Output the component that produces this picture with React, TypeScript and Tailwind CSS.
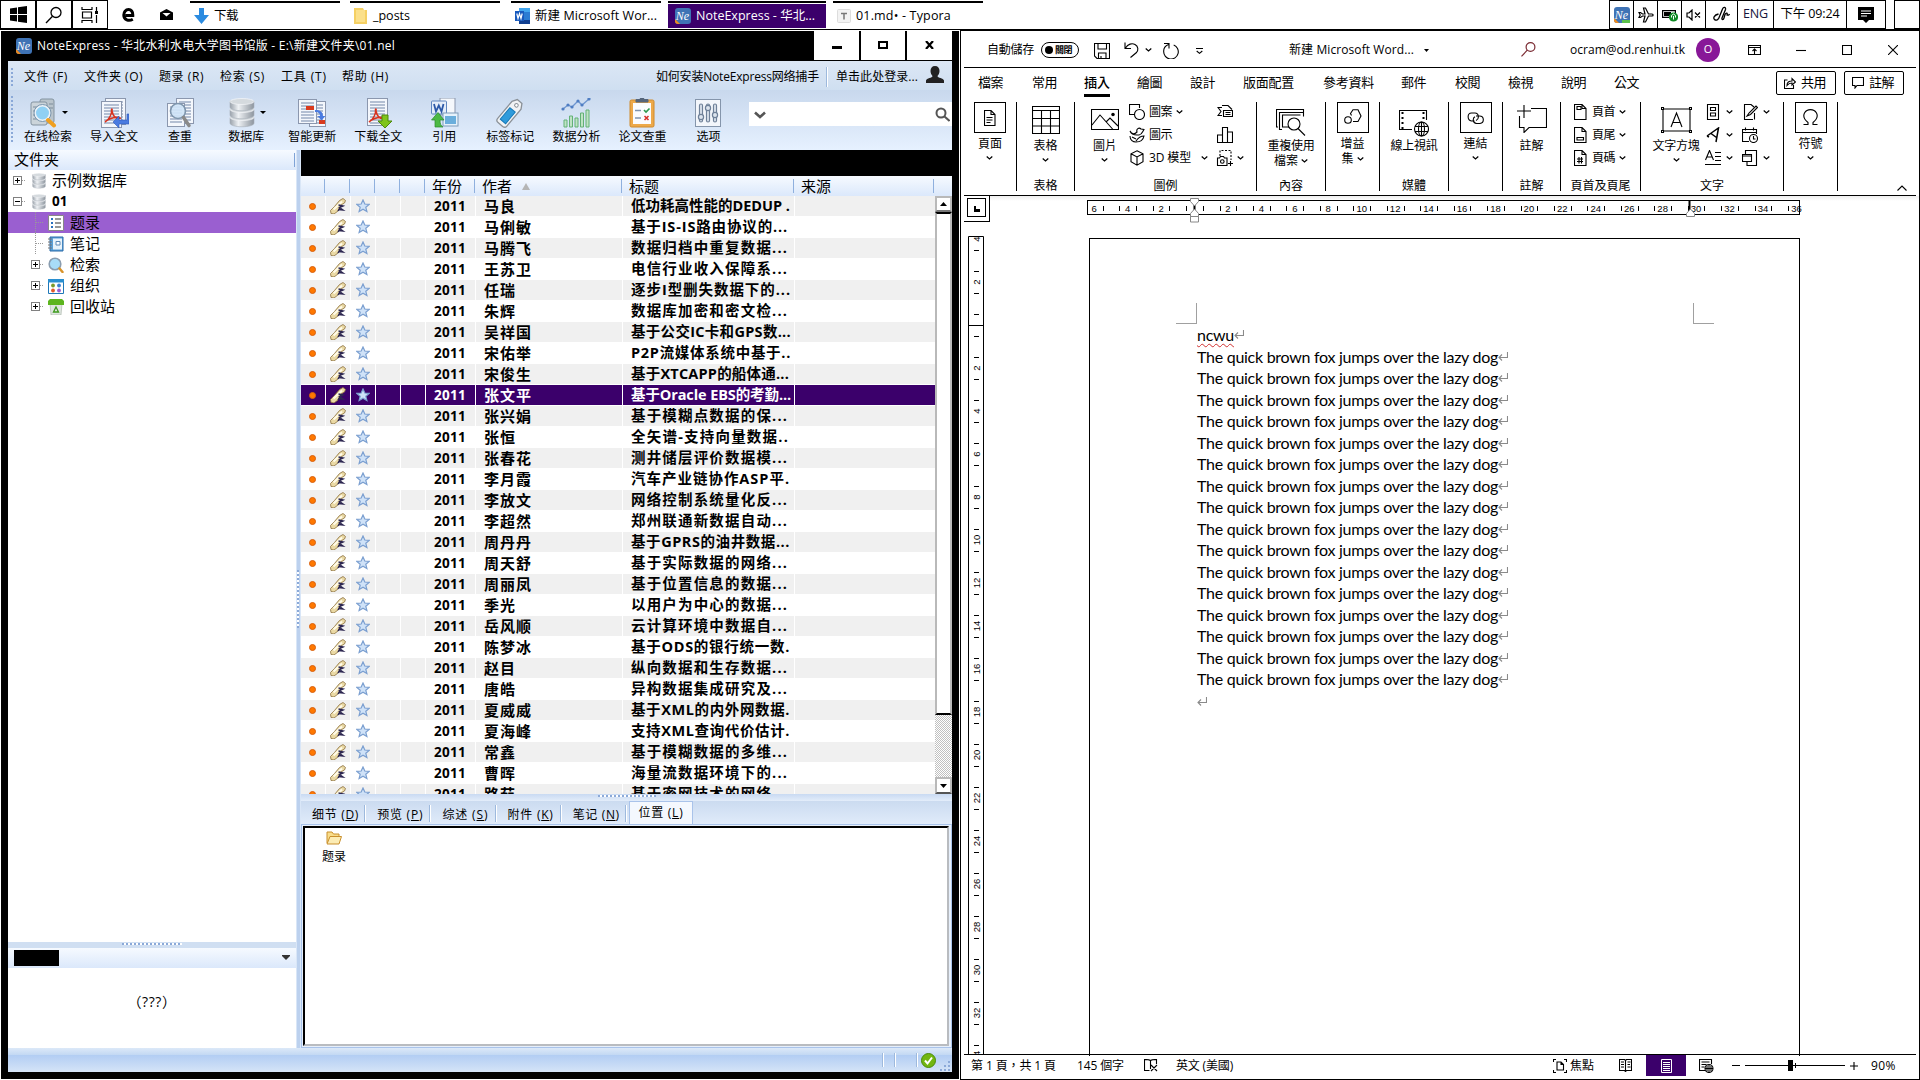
import React, { useLayoutEffect, useRef, useState } from "react";

/* Text run that adjusts its tracking so that it fills a given width. */
function Fit({ w, children, className = "" }: { w: number; children: React.ReactNode; className?: string }) {
  const ref = useRef<HTMLSpanElement>(null);
  const [ls, setLs] = useState(0);
  useLayoutEffect(() => {
    const el = ref.current;
    if (!el) return;
    const n = (el.textContent || "").length;
    if (n > 0) setLs((w - el.getBoundingClientRect().width) / n);
  }, [w]);
  return (
    <span className={"block shrink-0 whitespace-nowrap " + className} style={{ width: w, letterSpacing: ls }}>
      <span ref={ref}>{children}</span>
    </span>
  );
}

const SC = "font-['Open_Sans','Noto_Sans_CJK_SC',sans-serif]";
const TC = "font-['Open_Sans','Noto_Sans_CJK_TC',sans-serif]";

function NeLogo({ badge = false }: { badge?: boolean }) {
  return (
    <svg width="16" height="16" viewBox="0 0 16 16" className="shrink-0">
      <rect width="16" height="16" rx="3" fill="#3f73b5" />
      <path d="M0 11L5 16H3a3 3 0 0 1-3-3z" fill="#f08c1e" />
      {badge && <rect x="8" y="13" width="8" height="3" fill="#5cc04c" />}
      <text x="7.500" y="11.500" fontSize="12" fontStyle="italic" textAnchor="middle" fill="#fff" fontFamily="Liberation Serif">Ne</text>
    </svg>
  );
}

/* ---------- Taskbar ---------- */

function TaskTab({ cls, w, label, children, active = false }: { cls: string; w: number; label: string; children: React.ReactNode; active?: boolean }) {
  return (
    <div className={"flex h-[28px] shrink-0 flex-col pt-px " + cls}>
      <div className="h-[2px] bg-black" />
      <div className={"mt-px flex h-[24px] items-center gap-[5px] " + (active ? "bg-[#3b006b] pl-[7px] text-white" : "pl-[4px] text-black")}>
        {children}
        <Fit w={w} className="text-[12.5px]">{label}</Fit>
      </div>
    </div>
  );
}

function Taskbar() {
  return (
    <div className={"flex h-[29px] bg-white " + SC}>
      <div className="flex h-[29px] w-[36px] shrink-0 items-center justify-center border border-black">
        <svg width="17" height="17" viewBox="0 0 17 17"><path d="M0 2.4L7 1.4V8H0zM8 1.2L17 0v8H8zM0 9h7v6.6l-7-1zM8 9h9v8l-9-1.2z" /></svg>
      </div>
      <div className="flex h-[29px] w-[36px] shrink-0 items-center justify-center border border-black">
        <svg width="18" height="18" viewBox="0 0 18 18" fill="none" stroke="#000" strokeWidth="1.3"><circle cx="11" cy="6.5" r="5" /><path d="M7.5 10.2L1 17" /></svg>
      </div>
      <div className="flex h-[29px] w-[36px] shrink-0 items-center justify-center border border-black">
        <svg width="18" height="18" viewBox="0 0 18 18" fill="none" stroke="#000" strokeWidth="1.2"><path d="M1 1v2.5h10V1M1 17v-2.500h10V17M1.500 6h9v6h-9zM15.500 1v4M15.500 9v8" /><path d="M14 5h3v3h-3z" fill="#000" stroke="none" /></svg>
      </div>
      <div className="ml-[14px] flex w-[14px] shrink-0 items-center">
        <svg width="13" height="14" viewBox="0 0 13 14" fill="none" stroke="#000" strokeWidth="3"><path d="M3.5 7.5H10.8C11 3.5 9 1.6 6.6 1.6 3.6 1.6 1.8 4 1.8 7c0 5 5 6.500 9 4.300" /></svg>
      </div>
      <div className="ml-[24px] flex w-[13px] shrink-0 items-center">
        <svg width="13" height="11" viewBox="0 0 13 11"><path d="M0 3.500L6.500 0 13 3.500V11H0z" /><path d="M2.500 4h8L6.500 7.500z" fill="#fff" /></svg>
      </div>
      <TaskTab cls="ml-[17px] w-[150px]" w={24} label="下载">
        <svg width="15" height="16" viewBox="0 0 15 16"><path d="M5 0h5v7h5l-7.500 9L0 7h5z" fill="#2b8be0" /></svg>
      </TaskTab>
      <TaskTab cls="ml-[10px] w-[150px]" w={37} label="_posts">
        <svg width="14" height="16" viewBox="0 0 14 16"><path d="M0 0h9l1 2h3v14H0z" fill="#f5d063" /><path d="M2 2h9v12H2z" fill="#fbe08a" /></svg>
      </TaskTab>
      <TaskTab cls="ml-[11px] w-[150px]" w={122} label="新建 Microsoft Wor...">
        <svg width="15" height="16" viewBox="0 0 15 16"><path d="M4 0h11v16H4z" fill="#2b7cd3" /><path d="M4 0h11v4H4z" fill="#41a5ee" /><path d="M4 12h11v4H4z" fill="#103f91" /><path d="M0 3h9v10H0z" fill="#185abd" /><path d="M1.800 5.500l1.200 5 1.500-5 1.500 5 1.200-5" fill="none" stroke="#fff" strokeWidth="1.200" /></svg>
      </TaskTab>
      <TaskTab cls="ml-[7px] w-[158px]" w={119} label="NoteExpress - 华北..." active>
        <NeLogo />
      </TaskTab>
      <TaskTab cls="ml-[7px] w-[150px]" w={95} label="01.md• - Typora">
        <svg width="14" height="16" viewBox="0 0 14 16"><rect x=".5" y="1.500" width="13" height="13" rx="1" fill="#f3f3f3" stroke="#ddd" /><path d="M4 5.500h6M7 5.500v6" stroke="#777" strokeWidth="1.500" /></svg>
      </TaskTab>
      <div className="ml-auto flex">
        <div className="flex w-[25px] items-center justify-center border border-black"><NeLogo badge /></div>
        <div className="-ml-px flex w-[25px] items-center justify-center border border-black">
          <svg width="16" height="16" viewBox="0 0 16 16" fill="none" stroke="#000" strokeWidth="1.200"><path d="M1 5.500l1.200 2.500L1 10.500h1.500L4.500 9H7l-1.500 6h2L10.500 9H14c1.500 0 1.500-2 0-2h-3.500l-3-6h-2L7 7H4.500l-2-1.500z" /></svg>
        </div>
        <div className="-ml-px flex w-[25px] items-center justify-center border border-black">
          <svg width="16" height="14" viewBox="0 0 16 14"><path d="M.6 2.600h12.800v6.800H.6z" fill="none" stroke="#000" strokeWidth="1.200" /><path d="M2 4h7v4H2z" /><circle cx="11.500" cy="9" r="4.600" fill="#0f8a24" /><path d="M11.500 11.500V8M9.500 9.500V7.500l2-1.500 2 1.500v2" fill="none" stroke="#fff" /></svg>
        </div>
        <div className="-ml-px flex w-[25px] items-center justify-center border border-black">
          <svg width="15" height="12" viewBox="0 0 15 12" fill="none" stroke="#000" strokeWidth="1.200"><path d="M1 4h2l3-3v10L3 8H1zM9 3.500l5 5M14 3.500l-5 5" /></svg>
        </div>
        <div className="-ml-px flex w-[33px] items-center justify-center border border-black">
          <svg width="17" height="17" viewBox="0 0 17 17" fill="none" stroke="#000" strokeWidth="1.300"><path d="M5.500 8C1 9 0 12 1.500 13.500s4 .5 5-3L9.500 3c1-2.500 3.500-2 3 .5L9 12c-.5 2 1.500 2 2 0l1-3.500c1-2 3-1.500 2 .5 1 .5 2 0 2.500-1" /></svg>
        </div>
        <div className="-ml-px flex w-[37px] items-center justify-center border border-black text-[12.500px] text-[#14143c]"><Fit w={25}>ENG</Fit></div>
        <div className="-ml-px flex w-[74px] items-center justify-center border border-black text-[12.500px]"><Fit w={59}>下午 09:24</Fit></div>
        <div className="-ml-px flex w-[40px] items-center justify-center border border-black">
          <svg width="16" height="16" viewBox="0 0 16 16"><path d="M0 0h16v13h-5l-3 3-3-3H0z" /><path d="M3 4h10M3 6.500h10M3 9h6" stroke="#fff" strokeWidth="1.200" /></svg>
        </div>
        <div className="ml-[8px] w-[26px] border border-black" />
      </div>
    </div>
  );
}

/* ---------- NoteExpress toolbar drawings ---------- */

const Sheet = ({ x, y, w = 20, h = 26 }: { x: number; y: number; w?: number; h?: number }) => (
  <g>
    <rect x={x + 0.5} y={y + 0.5} width={w} height={h} fill="#f4f7fc" stroke="#8b97ae" />
    {Array.from({ length: Math.floor(h / 3) - 1 }, (_, i) => (
      <path key={i} d={`M${x + 3} ${y + 4 + i * 3}h${w - 5}`} stroke="#7387a9" />
    ))}
  </g>
);

const Acro = () => <path d="M6 24c5-3 7-9 6.500-12 0-2 1-1 .5 1 1 5 4 8 8 7.500 1-.5-.5-1.500-3-1.300-4 .3-9 2-12 4.800z" fill="none" stroke="#d9321e" strokeWidth="1.500" />;

const Cyl = ({ s = 30 }: { s?: number }) => (
  <svg width={s} height={s} viewBox="0 0 30 30" className="shrink-0">
    <defs><linearGradient id="cyl" x1="0" x2="1"><stop offset="0" stopColor="#9aa2ab" /><stop offset=".35" stopColor="#eef1f4" /><stop offset="1" stopColor="#8d959e" /></linearGradient></defs>
    {[19, 11, 3].map((y) => (
      <g key={y}><path d={`M3 ${y}v6c0 5 24 5 24 0v-6z`} fill="url(#cyl)" stroke="#a8b0b8" strokeWidth=".6" /><ellipse cx="15" cy={y + 0.5} rx="12" ry="3" fill="#d5dade" stroke="#f6f8fa" strokeWidth=".7" /></g>
    ))}
  </svg>
);

const toolIcons: Record<string, React.ReactNode> = {
  online: <g><rect x="11" y="1" width="14" height="24" rx="2" fill="#b9c4cc" stroke="#8393a0" /><rect x="2" y="4" width="16" height="23" rx="2" fill="#cbd4da" stroke="#8393a0" /><path d="M4 9h6M4 13h5M4 17h5M4 21h8M20 6h4M20 10h4" stroke="#7d8d9b" /><circle cx="13.500" cy="15" r="7.500" fill="#8fd0f4" stroke="#eaf2f8" strokeWidth="2" /><circle cx="13.500" cy="15" r="8.500" fill="none" stroke="#7a95ad" /><path d="M19 22l6 5.500" stroke="#f0a020" strokeWidth="4" strokeLinecap="round" /></g>,
  imp: <g><Sheet x={6} y={0} /><Sheet x={2} y={3} /><Acro /><path d="M28 16v6h-8v-4l-6 6 6 6v-4h10V16z" fill="#4a7be0" stroke="#2c58b8" strokeWidth=".6" /></g>,
  dup: <g><Sheet x={11} y={0} w={17} h={25} /><Sheet x={2} y={5} w={17} h={23} /><circle cx="13" cy="13" r="7.500" fill="#cfe4f7" fillOpacity=".92" stroke="#7f96ad" strokeWidth="1.600" /><path d="M18.500 19.500l5.500 8" stroke="#8a8a8a" strokeWidth="3.500" strokeLinecap="round" /></g>,
  upd: <g><Sheet x={12} y={3} w={16} h={25} /><Sheet x={1} y={1} w={18} h={24} /><path d="M9 8h8v4H9zM22 22h6v4h-6z" fill="#d93a1e" /><path d="M18 14c4 0 5 2 5 4h-2.500l4 4.500 4-4.500H26c0-4-3-6.500-8-6z" fill="#4a7be0" /></g>,
  down: <g><Sheet x={4} y={0} w={20} h={27} /><Acro /><path d="M19 17h6v6h4l-7 7-7-7h4z" fill="#7fc41c" stroke="#4d8a0c" /></g>,
  cite: <g><rect x="11" y="0" width="15" height="17" fill="#f5f8fc" stroke="#8b97ae" /><rect x="2.500" y="3" width="15" height="13" rx="1" fill="#e4edf9" stroke="#5f86c0" /><path d="M5 6l2 7.500 2.800-6 2.700 6 2-7.500" fill="none" stroke="#2c59a8" strokeWidth="1.800" /><rect x="14" y="15" width="15" height="13" fill="#e6f2fb" stroke="#7f9cba" /><path d="M16 18h11v8H16z" fill="#6aaedc" /><path d="M6 29V22H2.500L9 14.500l6 7.500h-4c0 4 1 6 3 7z" fill="#4cb944" stroke="#2a8a28" strokeWidth=".7" /></g>,
  tag: <g transform="rotate(40 15 15)"><path d="M9 5l3-5h6l3 5v22q0 3-3 3h-6q-3 0-3-3z" fill="#f1f3f5" stroke="#8b9198" strokeWidth="1.300" /><rect x="11.500" y="11" width="7" height="15" fill="#2f9bdb" stroke="#1779b8" /><circle cx="15" cy="5" r="1.800" fill="#fff" stroke="#8b9198" /></g>,
  chart: <g><path d="M2 11l5-4 4 2 6-6 4 4 7-6" fill="none" stroke="#6d95cf" strokeWidth="1.300" />{[[2, 11], [7, 7], [11, 9], [17, 3], [21, 7], [28, 1]].map(([x, y]) => <circle key={x} cx={x} cy={y} r="1.600" fill="#4f7dc2" />)}<path d="M3 22h3v7H3zM8.500 18h3v11h-3zM14 20h3v9h-3zM19.500 15h3v14h-3zM25 12h3v17h-3z" fill="#bfe3c4" stroke="#62b176" /></g>,
  check: <g><rect x="3" y="2" width="24" height="27" rx="1.500" fill="#eda94a" stroke="#cf8a2c" /><path d="M6 5h18v21H6z" fill="#fbfcfe" /><path d="M9 4h12V1.500h-4a2 2 0 0 0-4 0H9z" fill="#54647a" stroke="#54647a" /><path d="M8 12.500h6M8 20h6" stroke="#7f93ae" strokeWidth="1.500" /><path d="M17 12l2 2 3.500-3.500" fill="none" stroke="#2f9a50" strokeWidth="1.600" /><path d="M17.500 18l4 4M21.500 18l-4 4" stroke="#d8302a" strokeWidth="1.600" /></g>,
  opts: <g><rect x="2.500" y="1.500" width="25" height="27" fill="#f3f6fb" stroke="#8595ab" /><g fill="#dce4ee" stroke="#6f8199" strokeWidth="1.200"><rect x="6.500" y="6" width="3" height="18" rx="1.500" /><rect x="13.500" y="6" width="3" height="18" rx="1.500" /><rect x="20.500" y="6" width="3" height="18" rx="1.500" /><circle cx="8" cy="19" r="2.600" /><circle cx="15" cy="10" r="2.600" /><circle cx="22" cy="17" r="2.600" /></g></g>,
};

const tools: { label: string; icon: string; drop?: boolean }[] = [
  { label: "在线检索", icon: "online", drop: true },
  { label: "导入全文", icon: "imp" },
  { label: "查重", icon: "dup" },
  { label: "数据库", icon: "db", drop: true },
  { label: "智能更新", icon: "upd" },
  { label: "下载全文", icon: "down" },
  { label: "引用", icon: "cite" },
  { label: "标签标记", icon: "tag" },
  { label: "数据分析", icon: "chart" },
  { label: "论文查重", icon: "check" },
  { label: "选项", icon: "opts" },
];

function NeTitle() {
  return (
    <div className="flex h-[30px] items-center bg-black pl-[8px] text-white">
      <NeLogo />
      <Fit w={358} className="ml-[5px] text-[12px]">NoteExpress - 华北水利水电大学图书馆版 - E:\新建文件夹\01.nel</Fit>
      <div className="ml-auto flex h-[29px] gap-[2px] self-start">
        <div className="flex w-[45px] items-center justify-center bg-white"><div className="mt-[3px] h-[3px] w-[10px] bg-black" /></div>
        <div className="flex w-[44px] items-center justify-center bg-white"><div className="-mt-[2px] h-[8px] w-[10px] border-2 border-black" /></div>
        <div className="flex w-[45px] items-center justify-center bg-white"><svg width="9" height="8" viewBox="0 0 9 8" className="-mt-[2px]"><path d="M1 0l7 8M8 0L1 8" stroke="#000" strokeWidth="2.200" /></svg></div>
      </div>
    </div>
  );
}

function NeMenu() {
  return (
    <div className="flex h-[29px] items-center bg-gradient-to-b from-[#dce7f5] to-[#cfdff1] pt-[2px] text-[12px]">
      <div className="ml-[3px] h-[18px] w-[2px] shrink-0 bg-[repeating-linear-gradient(180deg,#8ba9d8_0_2px,transparent_2px_4px)]" />
      <Fit w={44} className="ml-[11px]">文件 (F)</Fit>
      <Fit w={59} className="ml-[16px]">文件夹 (O)</Fit>
      <Fit w={45} className="ml-[16px]">题录 (R)</Fit>
      <Fit w={45} className="ml-[16px]">检索 (S)</Fit>
      <Fit w={46} className="ml-[16px]">工具 (T)</Fit>
      <Fit w={47} className="ml-[15px]">帮助 (H)</Fit>
      <Fit w={163} className="ml-[267px]">如何安装NoteExpress网络捕手</Fit>
      <div className="ml-[7px] h-[20px] w-[2px] shrink-0 border-r border-white bg-[#9db9dd]" />
      <Fit w={82} className="ml-[8px]">单击此处登录...</Fit>
      <svg width="18" height="17" viewBox="0 0 18 17" className="ml-[8px] -mt-[4px] shrink-0"><path d="M9 0c3 0 4.500 2 4.500 5 0 2-1 4-2 5 0 2 6 2 6.500 4.500V17H0v-2.500C.5 12 6.500 12 6.500 10c-1-1-2-3-2-5 0-3 1.500-5 4.500-5z" fill="#222" /></svg>
    </div>
  );
}

function NeToolbar() {
  return (
    <div className="flex h-[60px] bg-gradient-to-b from-[#c8d8ed] to-[#e6f1ff]">
      <div className="ml-[3px] mt-[6px] h-[46px] w-[2px] shrink-0 bg-[repeating-linear-gradient(180deg,#8ba9d8_0_2px,transparent_2px_4px)]" />
      <div className="ml-[2px] flex">
        {tools.map((t) => (
          <div key={t.label} className="flex w-[66.050px] shrink-0 flex-col items-center pt-[7px]">
            <div className="flex h-[31px] items-center gap-[3px]">
              {t.icon === "db" ? <Cyl /> : <svg width="30" height="30" viewBox="0 0 30 30">{toolIcons[t.icon]}</svg>}
              {t.drop && <svg width="6" height="3" viewBox="0 0 6 3"><path d="M0 0h6L3 3z" /></svg>}
            </div>
            <span className="text-[12px] leading-[18px]">{t.label}</span>
          </div>
        ))}
      </div>
      <div className="ml-auto mt-[12px] flex h-[24px] w-[203px] shrink-0 items-center bg-white pl-[5px] pr-[2px]">
        <svg width="12" height="8" viewBox="0 0 12 8" fill="none" stroke="#555" strokeWidth="2.600" className="mt-[2px]"><path d="M1 1.500l5 4.500 5-4.500" /></svg>
        <svg width="15" height="15" viewBox="0 0 15 15" fill="none" stroke="#555" strokeWidth="2" className="ml-auto"><circle cx="6" cy="6" r="4.500" /><path d="M9.500 9.500l5 4.500" /></svg>
      </div>
    </div>
  );
}

/* ---------- NoteExpress library tree ---------- */

const Plus = ({ open = false }: { open?: boolean }) => (
  <svg width="13" height="9" viewBox="0 0 13 9" className="shrink-0"><rect x=".5" y=".5" width="8" height="8" fill="#fff" stroke="#808080" /><path d={open ? "M2 4.500h5" : "M2 4.500h5M4.500 2v5"} stroke="#000" /><path d="M9 4.500h4" stroke="#999" strokeDasharray="1 1" /></svg>
);

const Stub = () => <svg width="13" height="21" viewBox="0 0 13 21" className="shrink-0"><path d="M4.500 0v21M5 10.500h8" stroke="#999" strokeDasharray="1 1" /></svg>;

const treeIcons: React.ReactNode[] = [
  <g key="a"><path d="M.5.500h15v15H.5z" fill="#fff" stroke="#888" /><path d="M7 4h6M7 8h6M7 12h6" stroke="#333" strokeWidth="1.200" /><path d="M3 3h2v2H3zM3 7h2v2H3zM3 11h2v2H3z" fill="#2a70c0" /></g>,
  <g key="b"><path d="M2 1h13v14H2z" fill="#5aa0d8" stroke="#2a6aa8" /><path d="M5 2.500h9v11H5z" fill="#e8f3fb" /><path d="M8 5.500h4v3.500H8z" fill="#fff" stroke="#5c8ab8" /><path d="M0 3h4M0 6h4M0 9h4M0 12h4" stroke="#777" /></g>,
  <g key="c"><circle cx="7" cy="7" r="5.800" fill="#a8dcf8" stroke="#8a9db0" strokeWidth="1.600" /><path d="M11.500 11.500l3 3.500" stroke="#d8932a" strokeWidth="2.500" strokeLinecap="round" /></g>,
  <g key="d"><path d="M.5 1.500h15v14H.5z" fill="#fff" stroke="#1f78b8" /><path d="M0 1h16v3.500H0z" fill="#2a8fd0" /><circle cx="5" cy="7.500" r="1.900" fill="#7a9a2a" /><circle cx="11" cy="7.500" r="1.900" fill="#3a80d0" /><circle cx="5" cy="12.500" r="1.900" fill="#e05a2a" /><circle cx="11" cy="12.500" r="1.900" fill="#9a5ad0" /></g>,
  <g key="e"><path d="M2 5h12l-1 11H3z" fill="#dfe6e0" stroke="#a5b0a5" strokeWidth=".6" /><path d="M0 2l2-2h12l2 2v4H0z" fill="#5db51e" /><path d="M8 8l2.500 5h-5z" fill="none" stroke="#3d9a1c" strokeWidth="1.300" /></g>,
];

function Tree() {
  const kids = ["题录", "笔记", "检索", "组织", "回收站"];
  return (
    <div className="flex w-[288px] shrink-0 flex-col bg-white text-[15px]">
      <div className="flex h-[20px] shrink-0 items-center justify-between bg-gradient-to-b from-[#f6faff] to-[#dbe8fb] pl-[6px]">
        <span className="-mt-px leading-none">文件夹</span>
        <div className="mr-px h-[14px] w-px bg-[#7fa3d6]" />
      </div>
      <div className="flex h-[21px] items-center pl-[5px]"><Plus /><span className="ml-[5px] flex"><Cyl s={16} /></span><span className="-mt-px ml-[5px] leading-none">示例数据库</span></div>
      <div className="flex h-[21px] items-center pl-[5px]"><Plus open /><span className="ml-[5px] flex"><Cyl s={16} /></span><span className="ml-[5px] text-[13.500px] font-bold leading-none">01</span></div>
      {kids.map((k, i) => (
        <div key={k} className={"flex h-[21px] items-center pl-[23px] " + (i === 0 ? "bg-[#9a5fd0]" : "")}>
          {i < 2 ? <Stub /> : <Plus />}
          <svg width="16" height="16" viewBox="0 0 16 16" className="ml-[4px] shrink-0">{treeIcons[i]}</svg>
          <span className="-mt-px ml-[6px] leading-none">{k}</span>
        </div>
      ))}
      <div className="mt-auto flex h-[6px] shrink-0 items-start justify-center bg-[#d0dff2] pt-px"><div className="h-[2px] w-[60px] bg-[repeating-linear-gradient(90deg,#8ba9d8_0_2px,#fff_2px_4px)]" /></div>
      <div className="flex h-[20px] shrink-0 items-center justify-between bg-gradient-to-b from-[#f6faff] to-[#dbe8fb] pl-[6px] pr-[6px]">
        <div className="h-[16px] w-[45px] bg-black" />
        <svg width="8" height="5" viewBox="0 0 8 5" className="-mt-[2px]"><path d="M0 0h8v1L4 5 0 1z" fill="#333" /></svg>
      </div>
      <div className="flex h-[80px] shrink-0 justify-center pt-[25px] text-[14px] leading-[18px]"><Fit w={49}>（???）</Fit></div>
    </div>
  );
}

/* ---------- NoteExpress record list ---------- */

const records: [string, string, number][] = [
  ["马良", "低功耗高性能的DEDUP .", 159],
  ["马俐敏", "基于IS-IS路由协议的...", 157],
  ["马腾飞", "数据归档中重复数据...", 157],
  ["王苏卫", "电信行业收入保障系...", 157],
  ["任瑞", "逐步I型删失数据下的...", 160],
  ["朱辉", "数据库加密和密文检...", 157],
  ["吴祥国", "基于公交IC卡和GPS数...", 160],
  ["宋佑举", "P2P流媒体系统中基于..", 160],
  ["宋俊生", "基于XTCAPP的船体通...", 158],
  ["张文平", "基于Oracle EBS的考勤...", 160],
  ["张兴娟", "基于模糊点数据的保...", 157],
  ["张恒", "全矢谱-支持向量数据..", 158],
  ["张春花", "测井储层评价数据模...", 157],
  ["李月霞", "汽车产业链协作ASP平.", 159],
  ["李放文", "网络控制系统量化反...", 157],
  ["李超然", "郑州联通新数据自动...", 157],
  ["周丹丹", "基于GPRS的油井数据...", 159],
  ["周天舒", "基于实际数据的网络...", 157],
  ["周丽凤", "基于位置信息的数据...", 157],
  ["季光", "以用户为中心的数据...", 157],
  ["岳风顺", "云计算环境中数据自...", 157],
  ["陈梦冰", "基于ODS的银行统一数.", 159],
  ["赵目", "纵向数据和生存数据...", 157],
  ["唐皓", "异构数据集成研究及...", 157],
  ["夏威威", "基于XML的内外网数据.", 159],
  ["夏海峰", "支持XML查询代价估计.", 159],
  ["常鑫", "基于模糊数据的多维...", 157],
  ["曹晖", "海量流数据环境下的...", 157],
  ["路茹", "基于密网技术的网络...", 157],
];

const COLS = "grid grid-cols-[25px_25px_25px_25px_25px_50px_147px_172px_140px]";

function HeadCell({ children, pl = "pl-[6px]" }: { children?: React.ReactNode; pl?: string }) {
  return (
    <div className={"flex items-center " + pl}>
      {children}
      <div className="ml-auto mr-px h-[14px] w-px bg-[#8fb0de]" />
    </div>
  );
}

function Records() {
  return (
    <div className="flex h-[644px] shrink-0 flex-col bg-white">
      <div className="h-[26px] shrink-0 bg-black" />
      <div className={"h-[20px] w-[651px] shrink-0 bg-gradient-to-b from-[#f6faff] to-[#dbe8fb] text-[15px] leading-none " + COLS}>
        <HeadCell /><HeadCell /><HeadCell /><HeadCell /><HeadCell />
        <HeadCell>年份</HeadCell>
        <HeadCell>作者<svg width="8" height="7" viewBox="0 0 8 7" className="ml-[10px]"><path d="M4 0l4 7H0z" fill="#b5b5b5" /></svg></HeadCell>
        <HeadCell>标题</HeadCell>
        <HeadCell>来源</HeadCell>
      </div>
      <div className="flex h-[598px]">
        <div className="w-[634px] shrink-0 overflow-hidden font-bold">
          {records.map(([name, title, w], i) => {
            const cell = i === 9 ? "bg-[#3b006b]" : i % 2 === 0 ? "bg-[#f0f0f0]" : "bg-white";
            const c = "mr-px flex h-[20px] items-center overflow-hidden " + cell;
            return (
              <div key={name} className={"h-[21px] " + COLS + (i === 9 ? " text-white" : " text-black")}>
                <div className={c + " justify-center"}><div className="ml-px mr-[2px] mt-px size-[7px] rounded-full border border-[#d8600e] bg-[#ff7800]" /></div>
                <div className={c + " justify-center"}>
                  <svg width="16" height="16" viewBox="0 0 16 16"><path d="M9.500 2.500L13 .5l2.500 2-1 2.500-3.500 2-3 6-4 3-3-.5-.5-3 4-4z" fill="#ead9a4" stroke="#8a6e3c" strokeWidth=".8" /><path d="M3.500 11.500L12 3.500" stroke="#fffbe8" strokeWidth="2.200" /><path d="M8.500 7l4.500 1-3.500 1.500 3.500 2.500-4.500-.5M8 13l3.500-6" fill="none" stroke="#2c2650" strokeWidth="1.400" /></svg>
                </div>
                <div className={c + " justify-center"}>
                  <svg width="14" height="14" viewBox="0 0 14 14"><path d="M7 1l1.800 4 4.400.4-3.400 2.900 1.100 4.300L7 10.300l-3.900 2.300 1.100-4.300L.8 5.400 5.200 5z" fill="#cfe2f8" stroke="#7b9fd0" strokeWidth="1.200" /></svg>
                </div>
                <div className={c} />
                <div className={c} />
                <div className={c + " pl-[8px] text-[13.500px]"}><Fit w={32}>2011</Fit></div>
                <div className={c + " pl-[8px] text-[15px]"}><Fit w={name.length * 16}>{name}</Fit></div>
                <div className={c + " pl-[8px] text-[14.500px]"}><Fit w={w}>{title}</Fit></div>
                <div className={"flex h-[20px] " + cell} />
              </div>
            );
          })}
        </div>
        <div className="flex w-[17px] flex-col bg-[repeating-conic-gradient(#c0c0c0_0_25%,#fff_0_50%)] bg-[length:2px_2px]">
          <div className="flex h-[16px] shrink-0 items-center justify-center border-2 border-b-2 border-[#b9b9b9] border-b-[#777] bg-white"><svg width="7" height="4" viewBox="0 0 7 4"><path d="M3.500 0L7 4H0z" /></svg></div>
          <div className="h-[503px] shrink-0 border-2 border-[#b9b9b9] border-b-black border-t-black bg-white" />
          <div className="mt-auto flex h-[17px] items-center justify-center border-2 border-[#b9b9b9] border-b-[#555] bg-white"><svg width="7" height="4" viewBox="0 0 7 4"><path d="M3.500 4L7 0H0z" /></svg></div>
        </div>
      </div>
    </div>
  );
}

function DetailTabs() {
  const tabs = [["细节", "D", 47], ["预览", "P", 46], ["综述", "S", 46], ["附件", "K", 46], ["笔记", "N", 47]] as const;
  return (
    <>
      <div className="flex h-[7px] shrink-0 justify-center bg-gradient-to-b from-[#c9daf2] to-[#e3edfa] pt-px"><div className="h-[2px] w-[58px] bg-[repeating-linear-gradient(90deg,#8ba9d8_0_2px,#fff_2px_4px)]" /></div>
      <div className="flex h-[23px] shrink-0 bg-gradient-to-b from-[#cbdbf0] to-[#e0ebfa] text-[12px]">
        {tabs.map(([t, k, w]) => (
          <div key={k} className="flex w-[65.200px] shrink-0 items-center justify-between pl-[11px] pt-[4px]">
            <Fit w={w}>{t} (<u>{k}</u>)</Fit>
            <div className="-mt-[3px] h-[17px] w-[2px] border-r border-white bg-[#9db9dd]" />
          </div>
        ))}
        <div className="ml-[2px] flex w-[64px] items-center justify-center border border-b-0 border-[#a9c3ea] bg-[#f4f8fe]"><Fit w={45}>位置 (<u>L</u>)</Fit></div>
      </div>
      <div className="flex min-h-0 flex-1 border border-[#a9c3ea] bg-[#e6effb] p-px pr-[2px]">
        <div className="flex flex-1 flex-col border-2 border-b-[#b9bcc0] border-l-black border-r-[#b9bcc0] border-t-black bg-white">
          <div className="ml-[16px] mt-[3px] flex w-[26px] flex-col items-center">
            <svg width="16" height="14" viewBox="0 0 16 14"><path d="M1 12V1h5l1.500 2H13v3" fill="#f9dd8a" stroke="#c98f2c" /><path d="M1 13L4 5.500h11.500L13 13z" fill="#fcecb4" stroke="#c98f2c" /></svg>
            <span className="mt-[3px] text-[12px] leading-[18px]">题录</span>
          </div>
        </div>
      </div>
    </>
  );
}

function NoteExpress() {
  return (
    <div className={"flex w-[958px] shrink-0 flex-col bg-black pb-[7px] pl-[7px] pr-[7px] text-black " + SC}>
      <NeTitle />
      <NeMenu />
      <NeToolbar />
      <div className="flex h-[898px] shrink-0">
        <Tree />
        <div className="flex w-[5px] shrink-0 items-center border-x border-[#d9e6f7] bg-[#bcd1ee]"><div className="h-[58px] w-[2px] bg-[repeating-linear-gradient(180deg,#8ba9d8_0_2px,#fff_2px_4px)]" /></div>
        <div className="flex w-[651px] flex-col">
          <Records />
          <DetailTabs />
        </div>
      </div>
      <div className="flex h-[24px] shrink-0 items-center justify-end bg-[linear-gradient(180deg,#dce9f8_0,#c3d8f3_7px,#b2cdf3_7px,#d5e4f7_24px)]">
        <div className="h-[14px] w-[2px] border-r border-white bg-[#9db9dd]" />
        <div className="ml-[10px] h-[14px] w-[2px] border-r border-white bg-[#9db9dd]" />
        <div className="ml-[20px] h-[14px] w-[2px] border-r border-white bg-[#9db9dd]" />
        <svg width="15" height="15" viewBox="0 0 15 15" className="ml-[3px]"><circle cx="7.500" cy="7.500" r="7" fill="#72b610" stroke="#4a8a08" /><path d="M4 7.500l2.500 3L11 4.500" fill="none" stroke="#fff" strokeWidth="2" /></svg>
        <svg width="12" height="12" viewBox="0 0 12 12" fill="#8ba9d8" className="ml-[3px] mr-px self-end"><path d="M9 1h2v2H9zM5 5h2v2H5zM9 5h2v2H9zM1 9h2v2H1zM5 9h2v2H5zM9 9h2v2H9z" /></svg>
      </div>
    </div>
  );
}

/* ---------- Word ---------- */

const Chev = ({ className = "" }: { className?: string }) => (
  <svg width="7" height="4" viewBox="0 0 7 4" fill="none" stroke="#000" strokeWidth="1.200" className={"shrink-0 " + className}><path d="M.7.500L3.500 3 6.300.500" /></svg>
);

function I({ w = 16, h = 16, children, className = "" }: { w?: number; h?: number; children: React.ReactNode; className?: string }) {
  return <svg width={w} height={h} viewBox={`0 0 ${w} ${h}`} fill="none" stroke="#000" strokeWidth="1.100" className={"shrink-0 " + className}>{children}</svg>;
}

function WordTitle() {
  return (
    <div className="ml-[3px] mr-[3px] flex h-[37px] shrink-0 items-center border-b border-black pl-[23px] pt-px text-[12px]">
      <Fit w={47}>自動儲存</Fit>
      <div className="ml-[7px] flex h-[16px] w-[38px] items-center rounded-full border border-black pl-[3px]"><div className="size-[8px] rounded-full bg-black" /><span className="ml-[2px] text-[9px] font-bold leading-none tracking-[-0.500px]">關閉</span></div>
      <I className="ml-[15px] mt-[2px]"><path d="M.5.500h15v15H3l-2.500-2.500zM4 .5v5.500h8.500V.500M4.500 15.500V10h7.500v5.500M7 15.500V13" /></I>
      <I w={15} className="ml-[14px] mt-px"><path d="M1 .5v6h6M1.500 6C4 2 8 .8 11 2.500c3.500 2 3.500 5.500 1.500 8L6.500 15.500" /></I>
      <Chev className="ml-[6px]" />
      <I className="ml-[11px] mt-[2px]"><path d="M1 .5h5v5M5.500 1.500C2 3 .5 5.500 .7 8.500a7.300 7.300 0 1 0 10-6.500" /></I>
      <I w={7} h={6} className="ml-[17px] mt-[2px]"><path d="M0 .5h7M.7 3L3.500 5.300 6.300 3" /></I>
      <Fit w={125} className="ml-[86px]">新建 Microsoft Word...</Fit>
      <svg width="5" height="3" viewBox="0 0 5 3" className="ml-[10px] mt-[2px]"><path d="M0 0h5L2.500 3z" /></svg>
      <svg width="15" height="15" viewBox="0 0 15 15" fill="none" stroke="#7a2a32" strokeWidth="1.200" className="ml-[92px]"><circle cx="9.500" cy="5" r="4.400" /><path d="M6.300 8.200L.5 14.300" /></svg>
      <Fit w={115} className="ml-[34px]">ocram@od.renhui.tk</Fit>
      <div className="ml-[11px] flex size-[24px] items-center justify-center rounded-full bg-[#881798] text-[11px] text-white">O</div>
      <I w={13} h={10} className="ml-[28px]"><path d="M.5.500h12v9H.5zM.5 2.500h12M6.500 9V4.500M4.500 6l2-2 2 2" /></I>
      <I w={10} h={10} className="ml-[35px]"><path d="M0 5.500h10" /></I>
      <I w={10} h={10} className="ml-[36px]"><path d="M.5.500h9v9h-9z" /></I>
      <I w={10} h={10} className="ml-[36px]"><path d="M0 0l10 10M10 0L0 10" /></I>
    </div>
  );
}

const wordTabs: [string, number, string][] = [
  ["檔案", 25, "ml-[17px]"], ["常用", 25, "ml-[29px]"], ["插入", 26, "ml-[27px]"], ["繪圖", 25, "ml-[27px]"], ["設計", 25, "ml-[28px]"],
  ["版面配置", 51, "ml-[28px]"], ["參考資料", 51, "ml-[29px]"], ["郵件", 25, "ml-[27px]"], ["校閱", 25, "ml-[29px]"],
  ["檢視", 25, "ml-[28px]"], ["說明", 25, "ml-[28px]"], ["公文", 25, "ml-[28px]"],
];

function WordTabs() {
  return (
    <div className="flex h-[34px] shrink-0 items-start pt-[3px] text-[13px]">
      {wordTabs.map(([t, w, ml]) => (
        <div key={t} className={"shrink-0 pt-px " + ml + (t === "插入" ? " border-b-[3px] border-black font-medium" : "")}>
          <Fit w={w} className="h-[22px] leading-[20px]">{t}</Fit>
        </div>
      ))}
      <div className="ml-auto flex h-[24px] w-[60px] items-center rounded-[2px] border border-black pl-[7px]">
        <I w={12} h={12}><path d="M3.500 3H.5v8.500h9V8M3 8.500C3 5 5 4 8 4V1.500L11.500 5 8 8V6C6 6 4.500 6.500 3 8.500z" /></I>
        <Fit w={25} className="ml-[5px]">共用</Fit>
      </div>
      <div className="ml-[8px] mr-[15px] flex h-[24px] w-[60px] items-center rounded-[2px] border border-black pl-[7px]">
        <I w={12} h={12}><path d="M.5.500h11v8H5l-2 2.500v-2.500H.5z" /></I>
        <Fit w={25} className="ml-[5px]">註解</Fit>
      </div>
    </div>
  );
}

function Group({ w, label, children }: { w: string; label?: string; children: React.ReactNode }) {
  return (
    <div className={"flex h-[89px] shrink-0 flex-col border-r border-black " + w}>
      <div className="flex h-[75px] shrink-0">{children}</div>
      <div className="text-center leading-[18px]">{label}</div>
    </div>
  );
}

function Boxed({ icon, children }: { icon: React.ReactNode; children: React.ReactNode }) {
  return (
    <div className="flex flex-1 flex-col items-center">
      <div className="flex h-[31px] w-[32px] shrink-0 items-center justify-center border border-black">{icon}</div>
      <div className="mt-[3px] flex flex-col items-center leading-[15px]">{children}</div>
    </div>
  );
}

function Big({ icon, children, cls = "flex-1" }: { icon: React.ReactNode; children: React.ReactNode; cls?: string }) {
  return (
    <div className={"flex shrink-0 flex-col items-center " + cls}>
      <div className="flex h-[36px] items-end justify-center">{icon}</div>
      <div className="flex flex-col items-center leading-[15px]">{children}</div>
    </div>
  );
}

const Page = ({ children }: { children?: React.ReactNode }) => (
  <I w={13} h={16}><path d="M.5.500h7.500l4 4v11H.5zM8 .5v4h4" />{children}</I>
);

function Ribbon() {
  const row = "flex h-[23px] items-center";
  return (
    <div className="ml-[3px] mr-[3px] flex h-[94px] shrink-0 border-b border-black text-[12px]">
      <Group w="w-[53px]">
        <Boxed icon={<I w={12} h={16}><path d="M.5.500H7l4 4v11H.5zM7 .5v4h4M2.500 7.500h6M2.500 10h6M2.500 12.500h4" /></I>}>頁面<Chev className="mt-[5px]" /></Boxed>
      </Group>
      <Group w="w-[58px]" label="表格">
        <Big icon={<I w={28} h={28} className="mb-[4px]"><path d="M.5.500h27v27H.5zM.5 4.500h27M.5 12.500h27M.5 20h27M9.500 4.500v23M18.500 4.500v23" /></I>}>表格<Chev className="mt-[5px]" /></Big>
      </Group>
      <Group w="w-[182px]" label="圖例">
        <Big cls="w-[60px]" icon={<I w={28} h={21} className="mb-[8px]"><path d="M.5.500h27v20H.5zM1 16l8-10 13 14.500M15 13l4-4 8 8" /><circle cx="22" cy="5.500" r="1.200" fill="#000" /></I>}>圖片<Chev className="mt-[5px]" /></Big>
        <div className="ml-[-6px] -mt-[2px] w-[88px]">
          <div className={row}><I><path d="M5 10.500H.5V.500h10V4" /><circle cx="10.500" cy="10.500" r="5" /></I><Fit w={23} className="ml-[4px]">圖案</Fit><Chev className="ml-[4px]" /></div>
          <div className={row}><I><path d="M1 4c2 4 5 3 7 1C7 2 10 0 12 2c1 0 2 0 3 .5-2 3-2 5-5 5.500C7 8 3 9 1 4zM1 9c0 4 3 6 6 6s7-1 8-6c-4 0-6 2-8 5M3 10l4 2" /></I><Fit w={23} className="ml-[4px]">圖示</Fit></div>
          <div className={row}><I><path d="M8 .8l6 3v8L8 15.200l-6-3.400v-8zM2 3.800l6 3.200 6-3.200M8 7v8" /></I><Fit w={42} className="ml-[4px]">3D 模型</Fit><Chev className="ml-[10px]" /></div>
        </div>
        <div className="-mt-[2px] w-[30px]">
          <div className={row}><I><path d="M5 3.500H1l3 4-3 4h4M5 1.500l6 0 4 4M6.500 6.500h9v6h-9zM8.500 8.500h5M8.500 10.500h5" /></I></div>
          <div className={row}><I><path d="M.5 8h5v7.500h-5zM5.500.5h5v15h-5zM10.500 5h5v10.500h-5z" /></I></div>
          <div className={row}><I className="overflow-visible"><path d="M3 6V.500h11V10" strokeDasharray="2 1.500" /><path d="M.5 8h2l1-1.500h3L7.500 8H10v7.500H.5zM11 13.500h5M13.500 11v5" /><circle cx="5.300" cy="11.500" r="1.800" /></I><Chev className="ml-[4px]" /></div>
        </div>
      </Group>
      <Group w="w-[69px]" label="內容">
        <Big icon={<I w={30} h={27} className="mb-[2px]"><path d="M2 18H.5V.500h27V5M6 20.500H3.500V3.500h24v4M13 18H6.500V6h18" /><circle cx="18" cy="15" r="6" fill="#fff" /><path d="M22 19.500l7 7" /></I>}><Fit w={47}>重複使用</Fit><span className="flex items-center gap-[3px]">檔案<Chev /></span></Big>
      </Group>
      <Group w="w-[54px]">
        <Boxed icon={<I w={18} h={17}><path d="M7.500 6.500L6.500 4.500 9 .8h5L17 7l-3 5.500H9" /><circle cx="4" cy="11" r="3.300" /></I>}>增益<span className="flex items-center gap-[3px]">集<Chev /></span></Boxed>
      </Group>
      <Group w="w-[69px]" label="媒體">
        <Big icon={<I w={30} h={27} className="mb-[1px]"><path d="M13 19.500H.5V.500h27V10" /><path d="M3.500 2v17M24.500 2v8" strokeWidth="2" strokeDasharray="2 3" /><circle cx="22.500" cy="19" r="7" fill="#fff" /><ellipse cx="22.500" cy="19" rx="3" ry="7" /><path d="M16 16.500h13M16 21.500h13M22.500 12v14" /></I>}><Fit w={47}>線上視訊</Fit></Big>
      </Group>
      <Group w="w-[54px]">
        <Boxed icon={<I w={17} h={14}><path d="M7.500 10H4.500C0 9 0 2 4.500 2H8c4 0 4.500 6 1 7.500M9 5h3.500C17.500 5 17.500 12 13 12.500H9.500C5.500 12 5.500 7 8 5.800" /></I>}>連結<Chev className="mt-[5px]" /></Boxed>
      </Group>
      <Group w="w-[58px]" label="註解">
        <Big icon={<I w={30} h={28} className="mb-[5px]"><path d="M14 4.500h15.500v19H12l-5 5v-5H2.500V12M7 0v14M0 7h14" transform="translate(0 -1)" /></I>}>註解</Big>
      </Group>
      <Group w="w-[80px]" label="頁首及頁尾">
        <div className="-mt-[2px] ml-[13px]">
          <div className={row}><Page><path d="M3 2.500h4v3H3z" /></Page><Fit w={23} className="ml-[5px]">頁首</Fit><Chev className="ml-[4px]" /></div>
          <div className={row}><Page><path d="M3 10.500h6.500v2.500H3z" /></Page><Fit w={23} className="ml-[5px]">頁尾</Fit><Chev className="ml-[4px]" /></div>
          <div className={row}><Page><path d="M3 9h6M3 11.500h6M5 7v6.500M7.500 7v6.500" /></Page><Fit w={23} className="ml-[5px]">頁碼</Fit><Chev className="ml-[4px]" /></div>
        </div>
      </Group>
      <Group w="w-[143px]" label="文字">
        <Big cls="w-[70px]" icon={<I w={31} h={26} className="mb-[5px]"><path d="M2 2h27v22H2z" /><path d="M.5.500h2v2h-2zM28.500.5h2v2h-2zM.5 23.500h2v2h-2zM28.500 23.500h2v2h-2z" fill="#fff" /><path d="M10 20l5.500-14L21 20M12 15.500h7" /></I>}><Fit w={47}>文字方塊</Fit><Chev className="mt-[5px]" /></Big>
        <div className="ml-[-6px] -mt-[2px] w-[37px]">
          <div className={row}><I><path d="M2.500.5h11v15h-11zM5.500 3.500h5v3h-5zM5.500 9h5v3h-5z" /></I><Chev className="ml-[5px]" /></div>
          <div className={row}><I><path d="M2 9L13.500 1l-2.500 14M6 6.500l5.500 4M2 9l2 1" strokeWidth="1.500" /></I><Chev className="ml-[5px]" /></div>
          <div className={row}><I><path d="M.5 10l4-9.500L8.500 10M2 7h5M10 2.500h6M10 6.500h6M10 10.500h6M0 14.500h16" /></I><Chev className="ml-[5px]" /></div>
        </div>
        <div className="-mt-[2px] w-[36px]">
          <div className={row}><I><path d="M11 15.500H2.500V.500H9L12 3M12.500 9v6.500M5 12l2-3 7-7 1.500 1.500-7 7z" /></I><Chev className="ml-[5px]" /></div>
          <div className={row}><I><path d="M7 14.500H.5v-12h14V7M.5 5.500h14M3.500.5v3M11.500.5v3" /><circle cx="11.500" cy="11.500" r="4" /><path d="M11.500 9v3h2" /></I></div>
          <div className={row}><I><path d="M3.500 4V.500h11v15H5V12M.5 4.500h9v7h-9zM.5 6h9" /></I><Chev className="ml-[5px]" /></div>
        </div>
      </Group>
      <Group w="w-[54px]">
        <Boxed icon={<I w={15} h={17}><path d="M.5 15.500h4.500v-2C.5 10 0 7 1.500 4c2.500-4.500 9.500-4.500 12 0 1.500 3 1 6-3.500 9.500v2h4.500" /></I>}>符號<Chev className="mt-[5px]" /></Boxed>
      </Group>
      <I w={10} h={6} className="ml-auto mr-[9px] mt-[83px]"><path d="M.5 5.500L5 1l4.500 4.500" /></I>
    </div>
  );
}

function HRuler() {
  const u = 16.72;
  const z = 107.5;
  const evens = Array.from({ length: 22 }, (_, i) => (i - 3) * 2);
  return (
    <svg width="718" height="26" viewBox="0 0 718 26" className="block overflow-visible">
      <rect x=".5" y="3.500" width="712" height="14" fill="#fff" stroke="#000" />
      {evens.map((n) => (
        <g key={n}>
          {n > -6 && <path d={`M${Math.round(z + n * u - u / 2) + 0.5} 9v5`} stroke="#000" />}
          {n < 36 && <path d={`M${Math.round(z + n * u + u / 2) + 0.5} 9v5`} stroke="#000" />}
          {n !== 0 && <text x={z + n * u} y="14.500" fontSize="9.500" textAnchor="middle" fontFamily="Liberation Sans">{Math.abs(n)}</text>}
        </g>
      ))}
      <path d="M107.500 8v6M602.500 4v9" stroke="#000" strokeWidth="2" />
      <path d="M103.500 1.500h8v3l-4 4.500-4-4.500zM103.500 19.500v-3l4-4.500 4 4.500v3zM103.500 19.500h8v5.500h-8zM599.500 19.500v-3l4-4.500 4 4.500v3z" fill="#fff" stroke="#888" />
    </svg>
  );
}

function VRuler() {
  const u = 21.5;
  const evens = Array.from({ length: 20 }, (_, i) => (i - 2) * 2);
  return (
    <svg width="17" height="818" viewBox="0 0 17 818" className="block overflow-hidden">
      <path d="M.5 818V.500h15V818M0 89.500h16" fill="none" stroke="#000" />
      {evens.map((n) => {
        const y = 89 + n * u;
        return (
          <g key={n}>
            <path d={`M6 ${Math.round(y - u / 2) + 0.5}h5M6 ${Math.round(y + u / 2) + 0.5}h5`} stroke="#000" />
            {n !== 0 && <text transform={`translate(11.500 ${y}) rotate(-90)`} fontSize="9.500" textAnchor="middle" fontFamily="Liberation Sans">{Math.abs(n)}</text>}
          </g>
        );
      })}
    </svg>
  );
}

const Ret = () => (
  <svg width="10" height="9" viewBox="0 0 10 9" fill="none" stroke="#8a8a8a" strokeWidth="1.100" className="mt-[-1px] shrink-0"><path d="M9.500 0v5.500H1M4 2.500l-3 3 3 3" /></svg>
);

function Document() {
  return (
    <div className="flex min-h-0 flex-1">
      <div className="w-[29px] shrink-0 pl-[3px]">
        <div className="flex h-[26px] w-[26px] items-center justify-center border-b border-r border-black pb-[2px]">
          <div className="flex size-[19px] items-center justify-center border border-black"><div className="mt-[3px] size-[6px] border-b-[3px] border-l-2 border-black" /></div>
        </div>
        <div className="ml-[4px] mt-[14px]"><VRuler /></div>
      </div>
      <div className="min-w-0 flex-1 bg-gradient-to-b from-[#eee] to-white to-[5px] pl-[97px] pt-[1px]">
        <HRuler />
        <div className="ml-[2px] mt-[15px] h-[818px] w-[711px] border border-b-0 border-black bg-white pt-[64px]">
          <div className="flex h-[21px] justify-between pl-[86px] pr-[85px]">
            <div className="w-[21px] border-b border-r border-[#a0a0a0]" />
            <div className="w-[21px] border-b border-l border-[#a0a0a0]" />
          </div>
          <div className="ml-[107px] text-[16px] font-['Lato','Noto_Sans',sans-serif]">
            <div className="flex h-[22px] items-center pb-px">
              <Fit w={37} className="leading-[19px] underline decoration-[#d03030] decoration-wavy decoration-1 underline-offset-[2px]">ncwu</Fit><Ret />
            </div>
            {Array.from({ length: 16 }, (_, i) => (
              <div key={i} className="flex h-[21.500px] items-center"><Fit w={301}>The quick brown fox jumps over the lazy dog</Fit><Ret /></div>
            ))}
            <div className="flex h-[24px] items-center"><Ret /></div>
          </div>
        </div>
      </div>
    </div>
  );
}

function WordStatus() {
  return (
    <div className="ml-[3px] mr-[3px] flex h-[25px] shrink-0 items-start border-t border-black text-[12px]">
      <div className="flex h-[21px] flex-1 items-center pl-[7px]">
        <Fit w={85}>第 1 頁，共 1 頁</Fit>
        <Fit w={47} className="ml-[21px]">145 個字</Fit>
        <I w={14} h={13} className="ml-[20px]"><path d="M6.500 1v9M6.500 1.500C5 .5 2 .5.500.500v11h5M6.500 1.500C8 .5 11 .5 12.500.500V5M7 6l6 6M13 6l-6 6" /></I>
        <Fit w={57} className="ml-[18px]">英文 (美國)</Fit>
        <I w={14} h={14} className="ml-[320px]"><path d="M3 .5H.5V3M11 .5h2.500V3M3 13.500H.5V11M11 13.500h2.500V11M4 3h4l2.500 2.500V11H4zM8 3v2.500h2.500" /></I>
        <Fit w={24} className="ml-[3px]">焦點</Fit>
        <I w={13} h={13} className="ml-[25px]"><path d="M6.500 1v11.500M.5.500h5l1 1 1-1h5v11h-5l-1 1-1-1h-5zM2 3h3M2 5.500h3M2 8h3M8.500 3h3M8.500 5.500h3M8.500 8h3" /></I>
        <div className="ml-[14px] flex h-[21px] w-[40px] items-center justify-center bg-[#3b006b]">
          <svg width="11" height="14" viewBox="0 0 11 14" fill="none" stroke="#fff"><path d="M.5.500h10v13H.5zM2 3.500h7M2 5.500h7M2 7.500h7M2 9.500h7M2 11.500h7" /></svg>
        </div>
        <I w={15} h={14} className="ml-[13px]"><path d="M6 11.500H.5V.500h12V5M2.500 3h8M2.500 5.500h5M2.500 8h3" /><circle cx="10" cy="9.500" r="4" /><path d="M6 9.500h8M10 5.500v8M8 6.500v6M12 6.500v6" /></I>
        <div className="ml-[18px] h-px w-[8px] bg-black" />
        <svg width="100" height="12" viewBox="0 0 100 12" className="ml-[5px]"><path d="M0 5.500h100M50.500 3v5" stroke="#000" /><path d="M43 0h5v11h-5z" /></svg>
        <I w={8} h={8} className="ml-[5px]"><path d="M0 4h8M4 0v8" /></I>
        <Fit w={25} className="ml-[13px]">90%</Fit>
      </div>
    </div>
  );
}

function Word() {
  return (
    <div className={"flex w-[960px] shrink-0 flex-col border border-black bg-white text-black " + TC}>
      <WordTitle />
      <WordTabs />
      <Ribbon />
      <Document />
      <WordStatus />
    </div>
  );
}

export default function App() {
  return (
    <div className="flex h-[1080px] w-[1920px] flex-col overflow-hidden bg-white text-black">
      <Taskbar />
      <div className="h-px shrink-0 bg-black" />
      <div className="flex h-[1050px] shrink-0">
        <div className="flex w-[960px] shrink-0 pb-px pl-px pt-px"><NoteExpress /></div>
        <Word />
      </div>
    </div>
  );
}
